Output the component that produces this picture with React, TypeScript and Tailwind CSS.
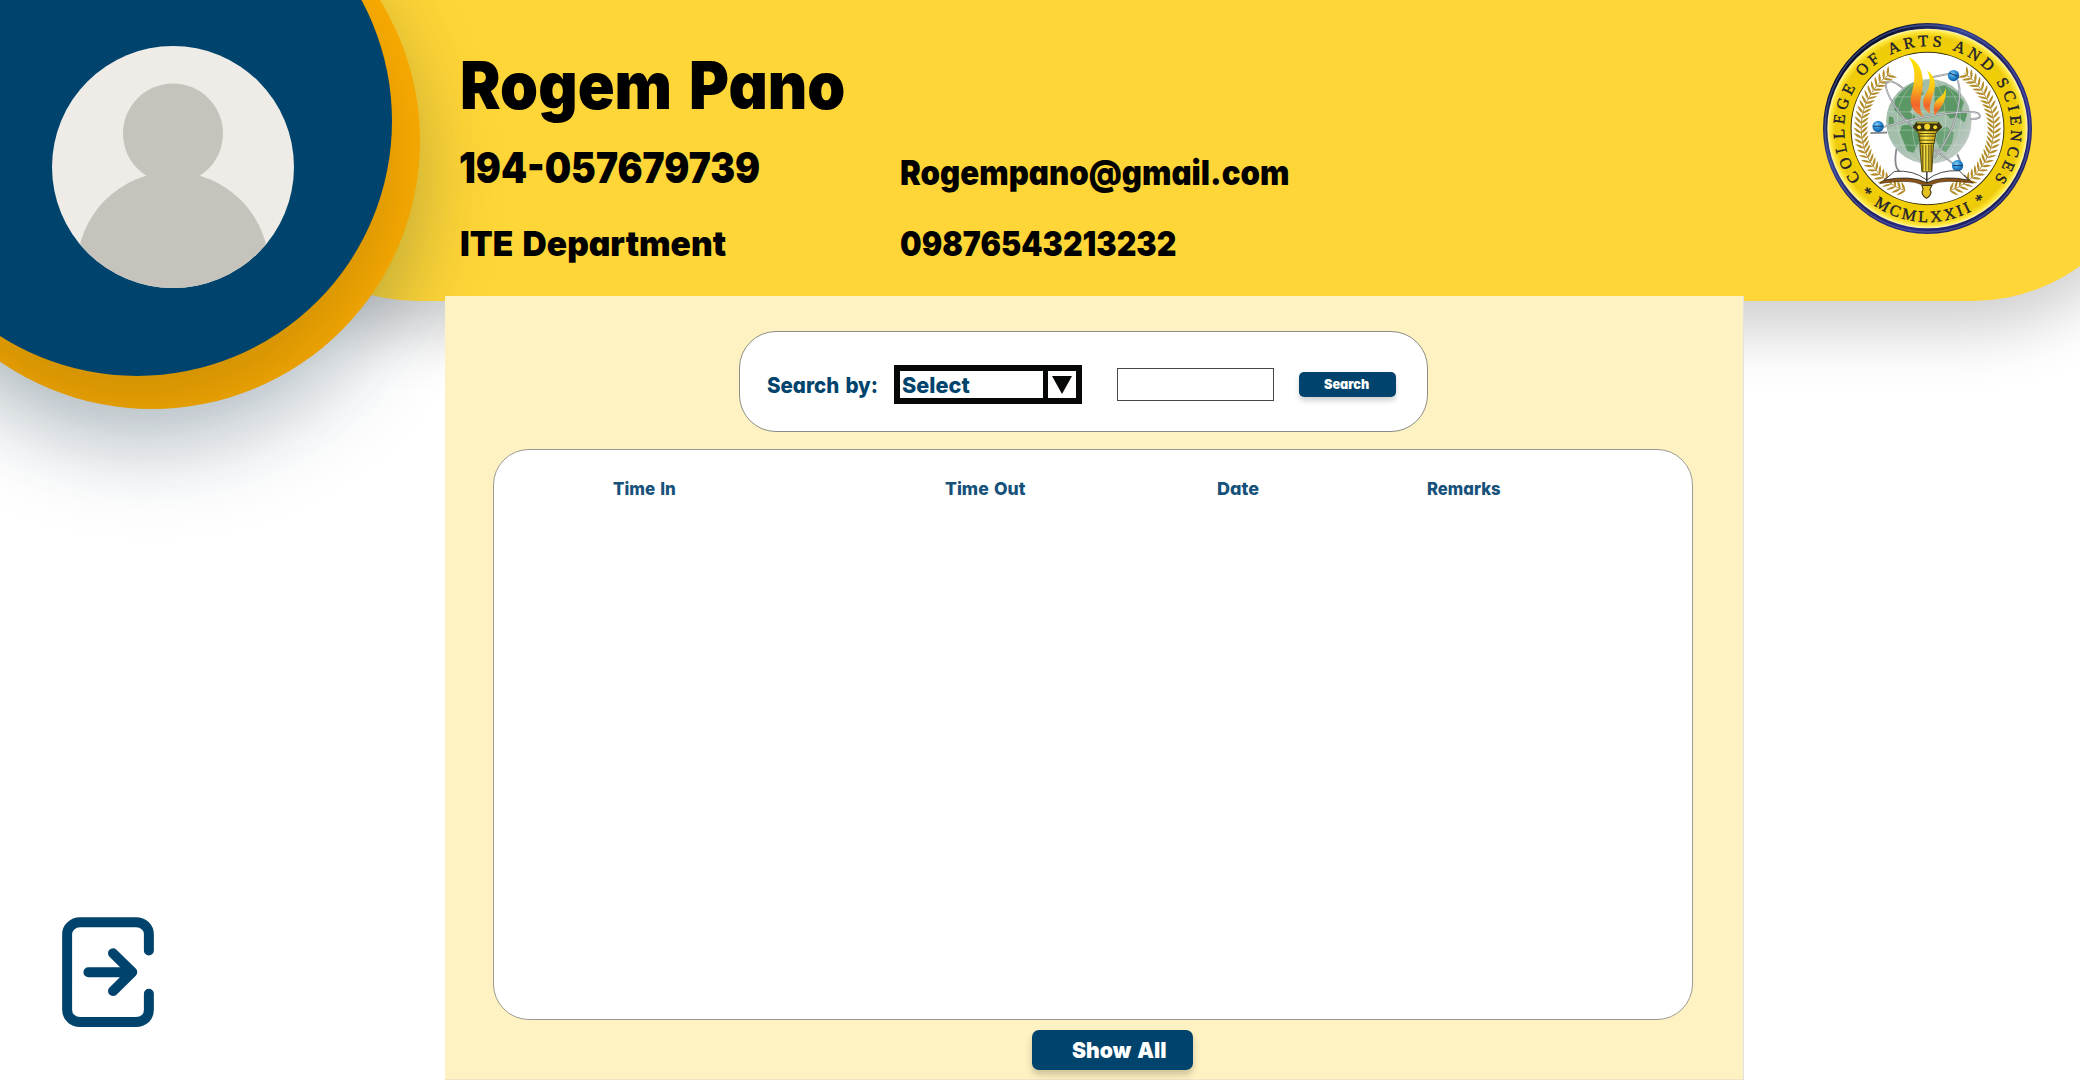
import { useLayoutEffect, useRef } from "react";
import clsx from "clsx";

/** Single-line label whose glyphs are condensed or widened to span `width` pixels. */
function FitText({ text, width, className }: { text: string; width: number; className?: string }) {
  const ref = useRef<HTMLSpanElement>(null);
  useLayoutEffect(() => {
    const el = ref.current;
    if (!el) return;
    el.style.transform = `scaleX(${width / el.offsetWidth})`;
  }, [text, width]);
  return (
    <span className={clsx("block leading-none", className)} style={{ width }}>
      <span
        ref={ref}
        className="inline-block origin-left whitespace-nowrap align-top font-['Inter','Open_Sans',sans-serif] leading-none [font-feature-settings:'cv11'_1] [word-spacing:0.08em]"
      >
        {text}
      </span>
    </span>
  );
}

function Laurel({ mirrored }: { mirrored?: boolean }) {
  const cx = 383;
  const cy = 385;
  const leaves: { x: number; y: number; a: number }[] = [];
  for (let i = 0; i <= 28; i++) {
    const deg = 233 - i * 4.4;
    const rad = (deg * Math.PI) / 180;
    leaves.push({ x: cx + 199 * Math.cos(rad), y: cy + 199 * Math.sin(rad), a: deg + 90 });
  }
  return (
    <g transform={mirrored ? "translate(766 0) scale(-1 1)" : undefined}>
      <path d="M273 219 A199 199 0 0 0 316 572" fill="none" stroke="#a07c1e" strokeWidth="2.500" />
      {leaves.map((l, i) => (
        <g key={i} transform={`translate(${l.x} ${l.y}) rotate(${l.a})`} fill="#b38d2a">
          <path d="M0 -1 Q14 -8 29 -3 Q14 5 0 1Z" transform="rotate(-42)" />
          <path d="M0 1 Q14 8 29 3 Q14 -5 0 -1Z" transform="rotate(42)" />
        </g>
      ))}
    </g>
  );
}

function CollegeSeal() {
  return (
    <svg viewBox="70 68 626 634" preserveAspectRatio="none" className="h-[211px] w-[209px]">
      <defs>
        <linearGradient id="rim" x1="0" y1="0" x2="1" y2="1">
          <stop offset="0" stopColor="#1b2257" />
          <stop offset=".16" stopColor="#090d28" />
          <stop offset=".35" stopColor="#33408f" />
          <stop offset=".5" stopColor="#23215f" />
          <stop offset=".7" stopColor="#2b2a86" />
          <stop offset="1" stopColor="#0b1036" />
        </linearGradient>
        <radialGradient id="band" cx=".5" cy=".5" r=".5">
          <stop offset=".74" stopColor="#f3d000" />
          <stop offset=".92" stopColor="#edcb0c" />
          <stop offset=".97" stopColor="#ffe63a" />
          <stop offset="1" stopColor="#fff6b0" />
        </radialGradient>
        <linearGradient id="flame" x1="0" y1="0" x2="0" y2="1">
          <stop offset="0" stopColor="#ffe600" />
          <stop offset=".45" stopColor="#fcc21c" />
          <stop offset=".8" stopColor="#f0642a" />
          <stop offset="1" stopColor="#f58a3c" />
        </linearGradient>
        <radialGradient id="globe" cx=".42" cy=".4" r=".6">
          <stop offset="0" stopColor="#9dbfa5" />
          <stop offset=".75" stopColor="#a3bdab" />
          <stop offset="1" stopColor="#bac8c0" />
        </radialGradient>
        <radialGradient id="atom" cx=".4" cy=".35" r=".65">
          <stop offset="0" stopColor="#8fd0f5" />
          <stop offset=".5" stopColor="#2a8fd6" />
          <stop offset="1" stopColor="#135c9e" />
        </radialGradient>
        <linearGradient id="torch" x1="0" y1="0" x2="1" y2="0">
          <stop offset="0" stopColor="#a98a12" />
          <stop offset=".4" stopColor="#ffe94a" />
          <stop offset="1" stopColor="#c09c14" />
        </linearGradient>
        <path id="arcTop" d="M182.500 537 A250 250 0 1 1 583.500 537" />
        <path id="arcBottom" d="M180.900 580.200 A281 281 0 0 0 563.600 600.300" />
      </defs>
      <ellipse cx="383" cy="385" rx="313" ry="317" fill="url(#rim)" />
      <ellipse cx="383" cy="385" rx="307" ry="311" fill="none" stroke="#5a6cb4" strokeWidth="4" opacity=".6" />
      <circle cx="383" cy="385" r="300" fill="url(#band)" />
      <circle cx="383" cy="385" r="229" fill="#fff" stroke="#3a3510" strokeWidth="3" />

      <g fill="#20202c" fontFamily="Liberation Serif, serif" fontSize="48" stroke="#20202c" strokeWidth="1.200">
        <text>
          <textPath href="#arcTop" textLength="1106">COLLEGE OF ARTS AND SCIENCES</textPath>
        </text>
        <text>
          <textPath href="#arcBottom" textLength="416">* MCMLXXII *</textPath>
        </text>
      </g>

      <Laurel />
      <Laurel mirrored />

      <circle cx="387" cy="364" r="128" fill="url(#globe)" />
      <g fill="#5b9866">
        <path d="M285 300 Q310 262 350 244 L372 250 L360 268 L372 280 L352 296 L362 312 L340 316 L330 336 L348 350 L332 362 L306 350 L284 330Z" />
        <path d="M306 376 L340 372 L358 392 L358 428 L340 458 L322 452 L310 420 L300 396Z" />
        <path d="M404 262 L436 254 L470 276 L492 306 L484 330 L502 340 L494 366 L470 350 L452 356 L432 334 L410 338 L404 300Z" />
        <path d="M412 392 L440 380 L462 398 L456 430 L438 456 L420 446 L408 420Z" opacity=".75" />
        <path d="M268 348 L280 352 L284 372 L266 374Z" />
      </g>
      <g fill="none" stroke="#dcebdf" strokeWidth="1.500" opacity=".7">
        <ellipse cx="387" cy="364" rx="50" ry="128" />
        <ellipse cx="387" cy="364" rx="95" ry="128" />
        <path d="M282 290H492M262 335H512M262 390H512M280 435H494" />
      </g>

      <g fill="none" stroke="#85888e" strokeWidth="5.500">
        <path d="M250 381 C360 345 520 325 538 342 C546 354 530 356 510 356" />
        <path d="M350 390 C300 350 256 280 258 250 C268 236 290 246 314 268" />
        <path d="M396 231 L446 221 M474 240 C492 300 462 400 404 472" />
        <path d="M290 446 C284 480 288 506 300 514 M404 448 L462 492 M472 462 L482 486" />
        <path d="M212 399 L262 397" />
      </g>
      <g fill="none" stroke="#e8e9ec" strokeWidth="2">
        <path d="M250 381 C360 345 520 325 538 342 C546 354 530 356 510 356" />
        <path d="M350 390 C300 350 256 280 258 250 C268 236 290 246 314 268" />
        <path d="M396 231 L446 221 M474 240 C492 300 462 400 404 472" />
        <path d="M404 448 L462 492" />
      </g>
      <circle cx="461" cy="226" r="17" fill="url(#atom)" />
      <circle cx="235" cy="379" r="17" fill="url(#atom)" />
      <circle cx="473" cy="497" r="17" fill="url(#atom)" />
      <path d="M448 218L474 228M220 378H250M460 496H487" stroke="#143a66" strokeWidth="3" />

      <g fill="url(#flame)">
        <path d="M327 170 C368 188 374 236 366 276 C360 306 356 330 372 350 C336 336 326 308 336 278 C346 236 350 206 327 170Z" />
        <path d="M382 211 C412 232 408 262 398 288 C390 312 388 328 392 341 C370 330 364 306 376 286 C390 262 396 240 382 211Z" />
        <path d="M437 262 C442 292 430 318 404 346 C400 322 402 306 414 296 C430 284 436 276 437 262Z" />
      </g>

      <g stroke="#3b3208" strokeWidth="2.500">
        <path d="M360 430H401L396 515H366Z" fill="url(#torch)" />
        <path d="M356 398H408L403 430H361Z" fill="url(#torch)" />
        <path d="M350 390H414L408 400H356Z" fill="url(#torch)" />
        <path d="M350 366H416L426 381L414 392H350L340 381Z" fill="#3a320c" />
        <path d="M369 434V512M378 434V512M387 434V512M394 434V512M357 408H407M359 420H405" fill="none" />
      </g>
      <path d="M352 368H414" stroke="#f4d52c" strokeWidth="3" />
      <circle cx="382" cy="380" r="9" fill="#f4d52c" />
      <circle cx="358" cy="381" r="6" fill="#f4d52c" />
      <circle cx="406" cy="381" r="6" fill="#f4d52c" />

      <path d="M240 550 L268 528 Q330 520 380 545 Q436 520 494 526 L520 549 Q430 536 396 553 H364 Q330 536 240 550Z" fill="#8b5316" stroke="#40260a" strokeWidth="2" />
      <path d="M254 540 L284 514 Q340 508 381 540 Q420 508 478 512 L506 540 Q430 524 381 548 Q330 524 254 540Z" fill="#fff" stroke="#222" strokeWidth="2.500" />
      <path d="M381 516V548" stroke="#222" strokeWidth="4" />
      <path d="M366 556H396L390 568Q400 582 380 595Q360 582 370 568Z" fill="#e3bf1f" stroke="#3b3208" strokeWidth="3" />
    </svg>
  );
}

function Avatar() {
  return (
    <svg viewBox="0 0 242 242" className="size-[242px]">
      <defs>
        <clipPath id="face">
          <circle cx="121" cy="121" r="121" />
        </clipPath>
      </defs>
      <g clipPath="url(#face)">
        <rect width="242" height="242" fill="#efece8" />
        <circle cx="121" cy="87.500" r="50" fill="#c6c3bd" />
        <circle cx="121" cy="222" r="96" fill="#c6c3bd" />
      </g>
    </svg>
  );
}

function ExitIcon() {
  return (
    <svg
      viewBox="66 80 276 331"
      className="h-[110px] w-[92px]"
      fill="none"
      stroke="#00446d"
      strokeWidth="30"
      strokeLinecap="round"
      strokeLinejoin="round"
    >
      <path d="M327 181V132Q327 117 317 107Q305 96 288 96H120Q103 96 92 107Q81 117 81 132V359Q81 375 92 385Q103 396 120 396H288Q305 396 317 385Q327 375 327 359V311" />
      <path d="M145 246H275M219 189L277 246L219 303" />
    </svg>
  );
}

function Header() {
  return (
    <header className="relative flex h-[301px] shrink-0">
      <div className="absolute top-[-200px] left-[234px] h-[501px] w-[1922px] rounded-[184px] bg-[#ffd637] shadow-[0_30px_60px_rgba(0,0,0,0.19)]" />
      <div className="absolute top-[-127px] left-[-116px] size-[536px] rounded-full bg-[#ffae00] shadow-[0_44px_92px_rgba(0,50,85,0.18)]" />
      <div className="absolute top-[-134px] left-[-118px] size-[510px] rounded-full bg-[#00446d] shadow-[0_44px_88px_rgba(0,20,25,0.2)]" />
      <div className="relative w-[461px] shrink-0 pt-[46px] pl-[52px]">
        <Avatar />
      </div>
      <div className="relative flex w-[437px] shrink-0 flex-col items-start pt-[52px] text-black">
        <FitText text="Rogem Pano" width={385} className="-ml-[1px] text-[66px] font-black" />
        <FitText text="194-057679739" width={301} className="mt-[28px] -ml-[2px] text-[43px] font-black" />
        <FitText text="ITE Department" width={266} className="mt-[38px] -ml-[1px] text-[34.5px] font-black" />
      </div>
      <div className="relative flex flex-1 flex-col items-start pt-[156px] pl-[2px] text-black">
        <FitText text="Rogempano@gmail.com" width={389} className="text-[34.5px] font-black" />
        <FitText text="09876543213232" width={276} className="mt-[36px] text-[34.5px] font-black" />
      </div>
      <div className="relative shrink-0 pt-[23px] pr-[48px]">
        <CollegeSeal />
      </div>
    </header>
  );
}

function SearchBar() {
  return (
    <div className="ml-[294px] flex h-[101px] w-[689px] items-center rounded-[37px] border border-[#8c8c86] bg-white pt-[6px] pl-[27px]">
      <FitText text="Search by:" width={111} className="text-[22px] font-extrabold text-[#00446d]" />
      <div className="ml-[16px] flex h-[39px] w-[188px] items-stretch border-[6px] border-[#050807]">
        <div className="flex w-[143px] items-center pl-[2px]">
          <FitText text="Select" width={68} className="text-[22px] font-extrabold text-[#00446d]" />
        </div>
        <div className="flex flex-1 items-center justify-center border-l-[5px] border-[#050807]">
          <svg viewBox="0 0 20 18" className="h-[18px] w-[20px]">
            <path d="M0 0H20L10 18Z" fill="#050807" />
          </svg>
        </div>
      </div>
      <div className="ml-[35px] h-[33px] w-[157px] border-[1.5px] border-[#48484a] bg-white" />
      <div className="ml-[25px] flex h-[25px] w-[97px] items-center rounded-[5px] bg-[#00446d] pl-[25px] shadow-[0_4px_5px_rgba(0,0,0,0.17)]">
        <FitText text="Search" width={45} className="text-[13.5px] font-black text-white" />
      </div>
    </div>
  );
}

function RecordsTable() {
  const head = "text-[18px] font-extrabold text-[#16517a]";
  return (
    <div className="mt-[17px] ml-[48px] flex h-[571px] w-[1200px] rounded-[36px] border border-[#9b9a92] bg-white pt-[30px] pl-[119px]">
      <div className="w-[332px]">
        <FitText text="Time In" width={63} className={head} />
      </div>
      <div className="w-[272px]">
        <FitText text="Time Out" width={80} className={head} />
      </div>
      <div className="w-[210px]">
        <FitText text="Date" width={42} className={head} />
      </div>
      <div>
        <FitText text="Remarks" width={74} className={head} />
      </div>
    </div>
  );
}

export default function App() {
  return (
    <div className="relative flex h-[1080px] w-[2080px] flex-col overflow-hidden bg-white">
      <Header />
      <div className="relative -mt-[5px] flex flex-1">
        <aside className="w-[445px] shrink-0 pt-[621px] pl-[62px]">
          <ExitIcon />
        </aside>
        <main className="h-[784px] w-[1299px] border-r border-b border-r-[#dfe1e4] border-b-[#eee5c9] bg-[#fff2c2] pt-[35px]">
          <SearchBar />
          <RecordsTable />
          <div className="mt-[10px] ml-[587px] flex h-[40px] w-[161px] items-center rounded-[7px] bg-[#00446d] pl-[40px] shadow-[0_5px_7px_rgba(0,0,0,0.2)]">
            <FitText text="Show All" width={94} className="text-[22px] font-black text-white" />
          </div>
        </main>
      </div>
    </div>
  );
}
